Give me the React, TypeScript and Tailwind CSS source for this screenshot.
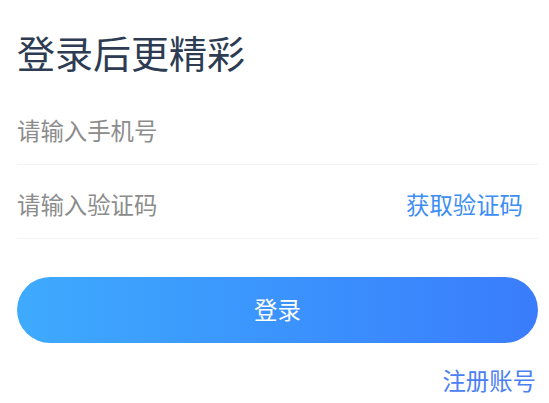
import React from 'react';

const App: React.FC = () => {
  return (
    <div
      className="w-[549px] h-[403px] bg-white pl-[17px] pr-[11px] overflow-hidden"
      style={{ fontFamily: '"Noto Sans CJK SC", "Noto Sans", sans-serif' }}
    >
      {/* 标题 */}
      <h1 className="mt-[33px] text-[38px] leading-[38px] text-[#2d3c52] font-normal">登录后更精彩</h1>

      {/* 手机号 */}
      <div className="mt-[20px] h-[74px] flex items-center border-b border-[#f3f3f3] pt-[6px]">
        <input
          className="flex-1 outline-none text-[23.4px] placeholder:text-[#8c8c8c] bg-transparent"
          placeholder="请输入手机号"
        />
      </div>

      {/* 验证码 */}
      <div className="h-[74px] flex items-center border-b border-[#f3f3f3] pt-[6px]">
        <input
          className="flex-1 min-w-0 outline-none text-[23.4px] placeholder:text-[#8c8c8c] bg-transparent"
          placeholder="请输入验证码"
        />
        <span className="text-[23.4px] text-[#3d8ef4] mr-[15px]">获取验证码</span>
      </div>

      {/* 登录按钮 */}
      <button className="mt-[38px] w-full h-[66px] rounded-full bg-gradient-to-r from-[#3eaafd] to-[#3a7cfc] text-white text-[23.4px]">
        登录
      </button>

      <div className="flex justify-end mt-[22px]">
        <span className="text-[23.4px] text-[#4a80f3] leading-[30px] mr-[2px]">注册账号</span>
      </div>
    </div>
  );
};

export default App;
